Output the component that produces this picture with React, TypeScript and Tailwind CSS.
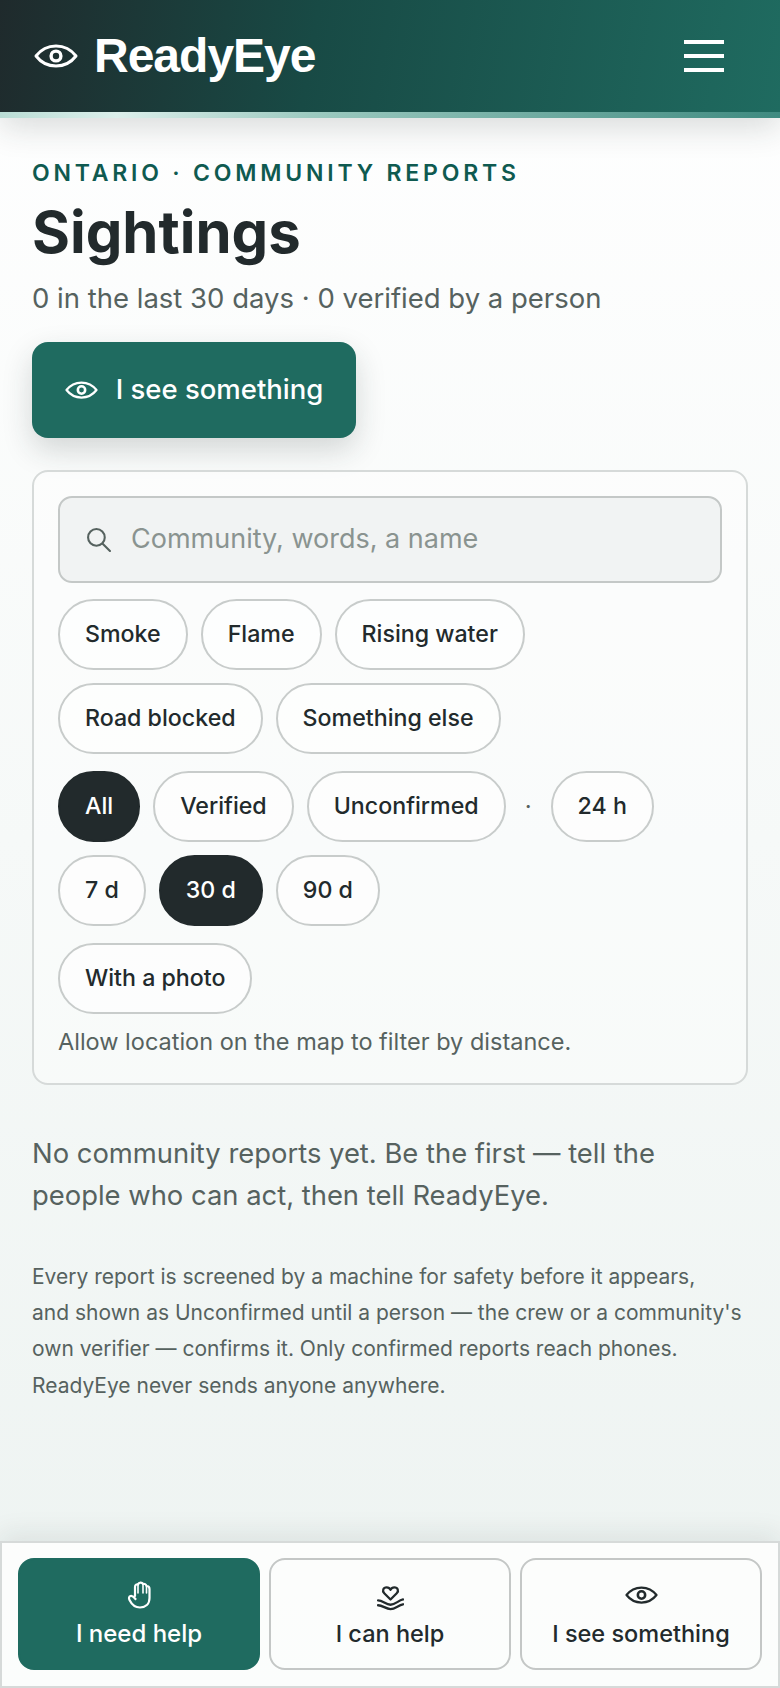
import React from 'react'

const EyeIcon = ({ className }: { className?: string }) => (
  <svg viewBox="0 0 44 24" fill="none" stroke="currentColor" strokeLinecap="round" strokeLinejoin="round" className={className}>
    <path d="M2 12C7 5.500 14 2 22 2s15 3.500 20 10c-5 6.500-12 10-20 10S7 18.500 2 12Z" strokeWidth="3" />
    <circle cx="22" cy="12" r="4.900" strokeWidth="3.400" />
  </svg>
)

const HandIcon = ({ className }: { className?: string }) => (
  <svg viewBox="0 0 24 28" fill="none" stroke="currentColor" strokeLinecap="round" strokeLinejoin="round" className={className}>
    <path d="M8 15V6C8 3.500 10 3 11 3.500 12 1 15 1 16 3c1.500-.5 3 .2 3.500 2 1.500 0 3 1 3 3v9c0 6-4 9.500-9.500 9.500-4.500 0-8-2.500-10.500-7.500-1-2-.5-3.500 1-4s3.500 1 5 3" strokeWidth="2.200" />
    <path d="M11 3.500V12M16 3v9M19.500 5v7" strokeWidth="1.600" />
  </svg>
)

const GiveIcon = ({ className }: { className?: string }) => (
  <svg viewBox="0 0 28 26" fill="none" stroke="currentColor" strokeWidth="2.400" strokeLinecap="round" strokeLinejoin="round" className={className}>
    <path d="M14 14 7.500 7.500C5 5 6.500 1.500 10 1.500c2 0 3.300 1 4 2.500.7-1.500 2-2.500 4-2.500 3.500 0 5 3.500 2.500 6Z" />
    <path d="M1 15c5 0 8 4.500 13 4.500S22 15 27 14" />
    <path d="M1 20c5 0 8 4 13 4s8-4 13-5" />
  </svg>
)

const SearchIcon = ({ className }: { className?: string }) => (
  <svg viewBox="0 0 24 24" fill="none" stroke="currentColor" strokeWidth="2" strokeLinecap="round" className={className}>
    <circle cx="10" cy="10" r="8" />
    <path d="m16 16 7 7" />
  </svg>
)

function Chip({ label, active }: { label: string; active?: boolean }) {
  return (
    <button
      className={
        active
          ? 'h-[71px] rounded-full border-2 border-[#222a2c] bg-[#222a2c] px-[25px] text-[23.200px] font-medium text-white'
          : 'h-[71px] rounded-full border-2 border-[#c8cccb] bg-white/60 px-[25px] text-[23.200px] font-medium text-[#222a2c]'
      }
    >
      {label}
    </button>
  )
}

function ActionButton({ label, icon, primary }: { label: string; icon: React.ReactNode; primary?: boolean }) {
  return (
    <button
      className={
        primary
          ? 'flex h-[112px] flex-1 flex-col items-center justify-center gap-[4px] rounded-[16px] border-2 border-[#1f6b60] bg-[#1f6b60] pt-[2px] text-[24px] font-medium text-white'
          : 'flex h-[112px] flex-1 flex-col items-center justify-center gap-[4px] rounded-[16px] border-2 border-[#c4c7c6] pt-[2px] text-[23.500px] font-medium text-[#222a2c]'
      }
    >
      <span className="flex h-[34px] items-center">{icon}</span>
      {label}
    </button>
  )
}

export default function App() {
  return (
    <div className="flex min-h-[1688px] flex-col bg-gradient-to-b from-white to-[#edf3f1] font-['Inter',sans-serif] text-[#222a2c]">
      {/* Header */}
      <header className="relative shadow-[0_10px_30px_rgba(31,42,44,0.16)]">
        <div className="flex h-[112px] items-center justify-between bg-[linear-gradient(100deg,#1f2a2c_0%,#184a45_40%,#1f6b60_100%)] pl-[34px] pr-[56px]">
          <div className="flex items-center gap-[16px] text-white">
            <EyeIcon className="h-[24px] w-[44px]" />
            <span className="font-['Liberation_Sans',sans-serif] text-[48px] font-bold tracking-[-1px]">ReadyEye</span>
          </div>
          <div className="flex w-[40px] flex-col gap-[10px]">
            <span className="h-[4px] bg-white" />
            <span className="h-[4px] bg-white" />
            <span className="h-[4px] bg-white" />
          </div>
        </div>
        <div className="h-[6px] bg-[linear-gradient(90deg,#b9dcd4_0%,#dcefeb_15%,#9ccac0_40%,#3f8a80_100%)]" />
      </header>

      <main className="px-[32px] pt-[41px]">
        <p className="text-[23px] leading-[28px] font-semibold tracking-[3.800px] text-[#0f5a50]">ONTARIO · COMMUNITY REPORTS</p>
        <h1 className="mt-[10px] text-[58px] leading-[70px] font-bold text-[#222a2c]">Sightings</h1>
        <p className="mt-[13px] text-[27.500px] leading-[36px] text-[#56625f]">0 in the last 30 days · 0 verified by a person</p>

        <button className="mt-[26px] flex h-[96px] w-[324px] items-center justify-center gap-[18px] rounded-[16px] bg-[#1f6b60] text-[27.500px] font-medium text-white shadow-[0_12px_30px_rgba(31,42,44,0.18)]">
          <EyeIcon className="h-[18px] w-[33px]" />
          I see something
        </button>

        {/* Filters */}
        <section className="mt-[32px] rounded-[16px] border-2 border-[#d6dad9] bg-white/40 px-[24px] pt-[24px] pb-[25px]">
          <div className="flex h-[87px] items-center gap-[20px] rounded-[14px] border-2 border-[#c4c8c7] bg-[#f1f3f3] px-[26px]">
            <SearchIcon className="h-[25px] w-[25px] text-[#56625f]" />
            <span className="text-[27px] text-[#8a9390]">Community, words, a name</span>
          </div>
          <div className="mt-[16px] flex flex-wrap gap-[13px]">
            <Chip label="Smoke" />
            <Chip label="Flame" />
            <Chip label="Rising water" />
            <Chip label="Road blocked" />
            <Chip label="Something else" />
          </div>
          <div className="mt-[17px] flex flex-wrap items-center gap-[13px]">
            <Chip label="All" active />
            <Chip label="Verified" />
            <Chip label="Unconfirmed" />
            <span className="px-[6px] text-[24px] text-[#56625f]">·</span>
            <Chip label="24 h" />
            <Chip label="7 d" />
            <Chip label="30 d" active />
            <Chip label="90 d" />
          </div>
          <div className="mt-[17px]">
            <Chip label="With a photo" />
          </div>
          <p className="mt-[12px] text-[23.500px] leading-[32px] text-[#56625f]">Allow location on the map to filter by distance.</p>
        </section>

        <p className="mt-[47px] text-[27.400px] leading-[42px] text-[#56625f]">
          No community reports yet. Be the first — tell the people who can act, then tell ReadyEye.
        </p>
        <p className="mt-[43px] text-[21px] leading-[36.200px] text-[#56625f]">
          Every report is screened by a machine for safety before it appears,
          <br />
          and shown as Unconfirmed until a person — the crew or a community's own verifier — confirms it. Only confirmed reports reach phones. ReadyEye never sends anyone anywhere.
        </p>
      </main>

      {/* Bottom actions */}
      <nav className="mt-auto flex gap-[9px] border-2 border-[#d6dad9] bg-white/80 px-[16px] pt-[15px] pb-[16px] shadow-[0_-8px_24px_rgba(31,42,44,0.08)]">
        <ActionButton primary label="I need help" icon={<HandIcon className="h-[28px] w-[24px]" />} />
        <ActionButton label="I can help" icon={<GiveIcon className="mt-[6px] h-[25px] w-[27px]" />} />
        <ActionButton label="I see something" icon={<EyeIcon className="h-[18px] w-[33px]" />} />
      </nav>
    </div>
  )
}
